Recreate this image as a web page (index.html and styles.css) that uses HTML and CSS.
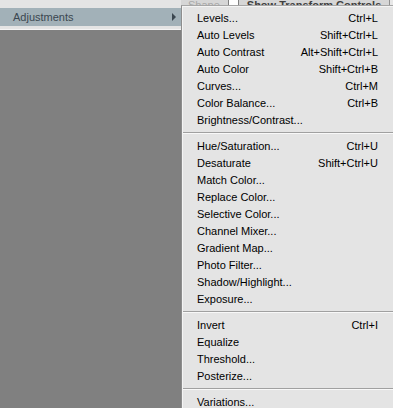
FILE: index.html
```html
<!DOCTYPE html>
<html>
<head>
<meta charset="utf-8">
<link rel="stylesheet" href="styles.css">
</head>
<body>
<div class="options-bar">
  <span class="opt-label">Shape</span>
  <span class="opt-check"></span>
  <span class="opt-text">Show Transform Controls</span>
  <span class="opt-btn"></span>
</div>

<div class="parent-menu">
  <div class="parent-item active">
    <span class="label">Adjustments</span>
    <span class="arrow"></span>
  </div>
</div>

<div class="submenu">
  <div class="item"><span>Levels...</span><span class="key">Ctrl+L</span></div>
  <div class="item"><span>Auto Levels</span><span class="key">Shift+Ctrl+L</span></div>
  <div class="item"><span>Auto Contrast</span><span class="key">Alt+Shift+Ctrl+L</span></div>
  <div class="item"><span>Auto Color</span><span class="key">Shift+Ctrl+B</span></div>
  <div class="item"><span>Curves...</span><span class="key">Ctrl+M</span></div>
  <div class="item"><span>Color Balance...</span><span class="key">Ctrl+B</span></div>
  <div class="item"><span>Brightness/Contrast...</span></div>
  <div class="sep"></div>
  <div class="item"><span>Hue/Saturation...</span><span class="key">Ctrl+U</span></div>
  <div class="item"><span>Desaturate</span><span class="key">Shift+Ctrl+U</span></div>
  <div class="item"><span>Match Color...</span></div>
  <div class="item"><span>Replace Color...</span></div>
  <div class="item"><span>Selective Color...</span></div>
  <div class="item"><span>Channel Mixer...</span></div>
  <div class="item"><span>Gradient Map...</span></div>
  <div class="item"><span>Photo Filter...</span></div>
  <div class="item"><span>Shadow/Highlight...</span></div>
  <div class="item"><span>Exposure...</span></div>
  <div class="sep"></div>
  <div class="item"><span>Invert</span><span class="key">Ctrl+I</span></div>
  <div class="item"><span>Equalize</span></div>
  <div class="item"><span>Threshold...</span></div>
  <div class="item"><span>Posterize...</span></div>
  <div class="sep"></div>
  <div class="item"><span>Variations...</span></div>
</div>
</body>
</html>
```

FILE: styles.css
```css
html, body {
  margin: 0;
  padding: 0;
  width: 393px;
  height: 408px;
  overflow: hidden;
}
body {
  background: #808080;
  font-family: "Liberation Sans", Arial, sans-serif;
  font-size: 11px;
  color: #000;
  position: relative;
}

.options-bar {
  height: 5px;
  background: #d6d6d6;
  display: flex;
  align-items: flex-end;
  overflow: hidden;
  padding-left: 188px;
  gap: 8px;
  color: #404040;
  font-size: 11px;
}
.opt-label, .opt-text {
  line-height: 11px;
  height: 11px;
  flex: none;
  transform: translateY(6px);
  font-weight: bold;
}
.opt-label { color: #a8a8a8; font-weight: normal; }
.opt-check {
  width: 9px; height: 9px;
  background: #fff;
  border: 1px solid #808080;
  flex: none;
  transform: translateY(5px);
}
.opt-btn {
  width: 16px; height: 8px;
  margin-left: auto;
  margin-right: 12px;
  background: #e8e8e8;
  border: 1px solid #909090;
  flex: none;
  transform: translateY(4px);
}

.parent-menu {
  position: absolute;
  top: 0;
  left: 0;
  width: 181px;
  background: #e4e4e4;
  padding-top: 8px;
  padding-bottom: 3px;
  border-bottom: 1px solid #f4f4f4;
}
.parent-item {
  height: 18px;
  display: flex;
  align-items: center;
  padding-left: 13px;
  padding-right: 4px;
}
.parent-item.active {
  background: #a2b1b8;
  color: #3b4750;
}
.parent-item .label { flex: 1; }
.arrow {
  width: 0; height: 0;
  border-top: 4px solid transparent;
  border-bottom: 4px solid transparent;
  border-left: 4px solid #3b4750;
  margin-right: 1px;
}

.submenu {
  position: absolute;
  top: 5px;
  left: 181px;
  width: 222px;
  background: #e4e4e4;
  border-top: 1px solid #a6a6a6;
  border-left: 1px solid #8e8e8e;
  box-shadow: inset 1px 1px 0 #f4f4f4;
  padding-top: 3px;
}
.item {
  height: 17px;
  display: flex;
  align-items: center;
  justify-content: space-between;
  padding-left: 15px;
  padding-right: 26px;
  white-space: nowrap;
}
.sep {
  height: 9px;
  margin-left: 1px;
  display: flex;
  flex-direction: column;
  justify-content: center;
}
.sep::before {
  content: "";
  display: block;
  height: 1px;
  background: #a0a0a0;
}
.sep::after {
  content: "";
  display: block;
  height: 1px;
  background: #f8f8f8;
}
```
